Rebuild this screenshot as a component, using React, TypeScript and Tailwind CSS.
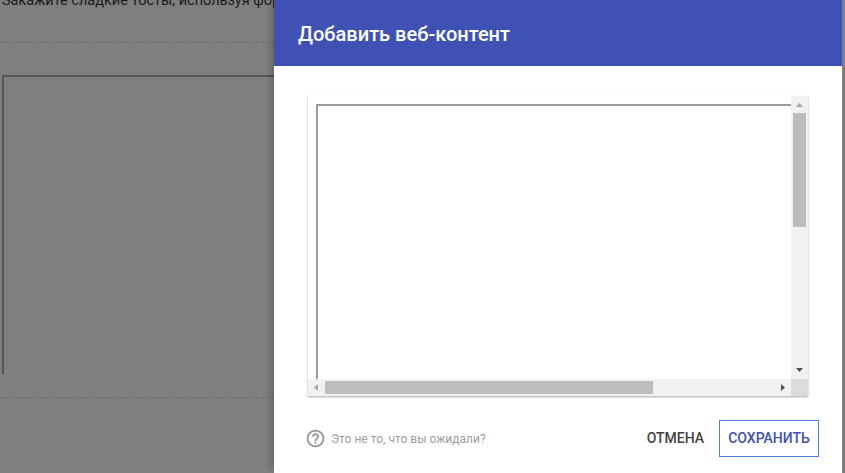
import { MdHelpOutline } from 'react-icons/md';

function Arrow({ dir }: { dir: 'up' | 'down' | 'left' | 'right' }) {
  const points = {
    up: '0,5 3.5,1 7,5',
    down: '0,1 7,1 3.5,5',
    left: '5,0 5,7 1,3.5',
    right: '1,0 1,7 5,3.5',
  }[dir];
  const color = dir === 'up' || dir === 'left' ? '#a3a3a3' : '#505050';
  return (
    <svg width="7" height="7" viewBox="0 0 7 7" className="block">
      <polygon points={points} fill={color} />
    </svg>
  );
}

function EmbedPreview() {
  return (
    <div className="w-[500px] h-[300px] flex flex-col bg-white shadow-[0_1px_2px_rgba(0,0,0,0.35)]">
      <div className="flex-1 flex min-h-0">
        <div className="flex-1 pl-2 pt-2 overflow-hidden">
          <div className="h-full border-t-2 border-l-2 border-[#9a9a9a]" />
        </div>
        <div className="w-[17px] bg-[#f1f1f1] flex flex-col items-center">
          <div className="h-[17px] pt-[2px] flex items-center justify-center">
            <Arrow dir="up" />
          </div>
          <div className="w-[13px] h-[114px] bg-[#bdbdbd]" />
          <div className="flex-1 flex items-end justify-center pb-[5px]">
            <Arrow dir="down" />
          </div>
        </div>
      </div>
      <div className="h-[17px] flex bg-[#f1f1f1]">
        <div className="flex-1 flex items-center">
          <div className="w-[17px] flex justify-center">
            <Arrow dir="left" />
          </div>
          <div className="w-[328px] h-[13px] bg-[#bdbdbd]" />
          <div className="flex-1 flex justify-end pr-[4px]">
            <Arrow dir="right" />
          </div>
        </div>
        <div className="w-[17px] bg-[#dcdcdc]" />
      </div>
    </div>
  );
}

export default function App() {
  return (
    <div className="relative w-[845px] h-[473px] overflow-hidden bg-[#7f7f7f] font-['Roboto',sans-serif]">
      {/* страница под затемнением */}
      <div className="w-[274px] h-full overflow-hidden">
        <div className="w-[500px] -mt-[8px] pl-[2px] text-[14.5px] leading-[18px] text-[#1a1a1a] whitespace-nowrap">
          Закажите сладкие тосты, используя форму
        </div>
        <div className="mt-[32px] border-t border-dashed border-[#6a6a6a]" />
        <div className="ml-[2px] mt-[32px] w-[400px] h-[299px] border-t-2 border-l-2 border-[#565656]" />
        <div className="mt-[23px] border-t border-dashed border-[#6a6a6a]" />
      </div>

      {/* диалог */}
      <div className="absolute top-0 bottom-0 left-[274px] w-[568px] flex flex-col bg-white shadow-[-6px_0_8px_-4px_rgba(0,0,0,0.25)]">
        <div className="h-[66px] shrink-0 bg-[#3f51b5] flex items-center pl-6 pt-[2px]">
          <h1 className="text-[20px] font-medium text-white">Добавить веб-контент</h1>
        </div>
        <div className="pl-[34px] pt-[30px]">
          <EmbedPreview />
        </div>
        <div className="flex items-center pl-[31px] pt-[24px]">
          <MdHelpOutline size={21} className="text-[#949494]" />
          <span className="ml-[5px] text-[12px] text-[#9e9e9e]">Это не то, что вы ожидали?</span>
          <button className="ml-auto text-[14px] font-medium text-[#424242]">ОТМЕНА</button>
          <button className="ml-[15px] mr-[23px] w-[100px] h-[37px] border border-[#4a7fe8] text-[14px] font-medium text-[#3f51b5]">
            СОХРАНИТЬ
          </button>
        </div>
      </div>
    </div>
  );
}
